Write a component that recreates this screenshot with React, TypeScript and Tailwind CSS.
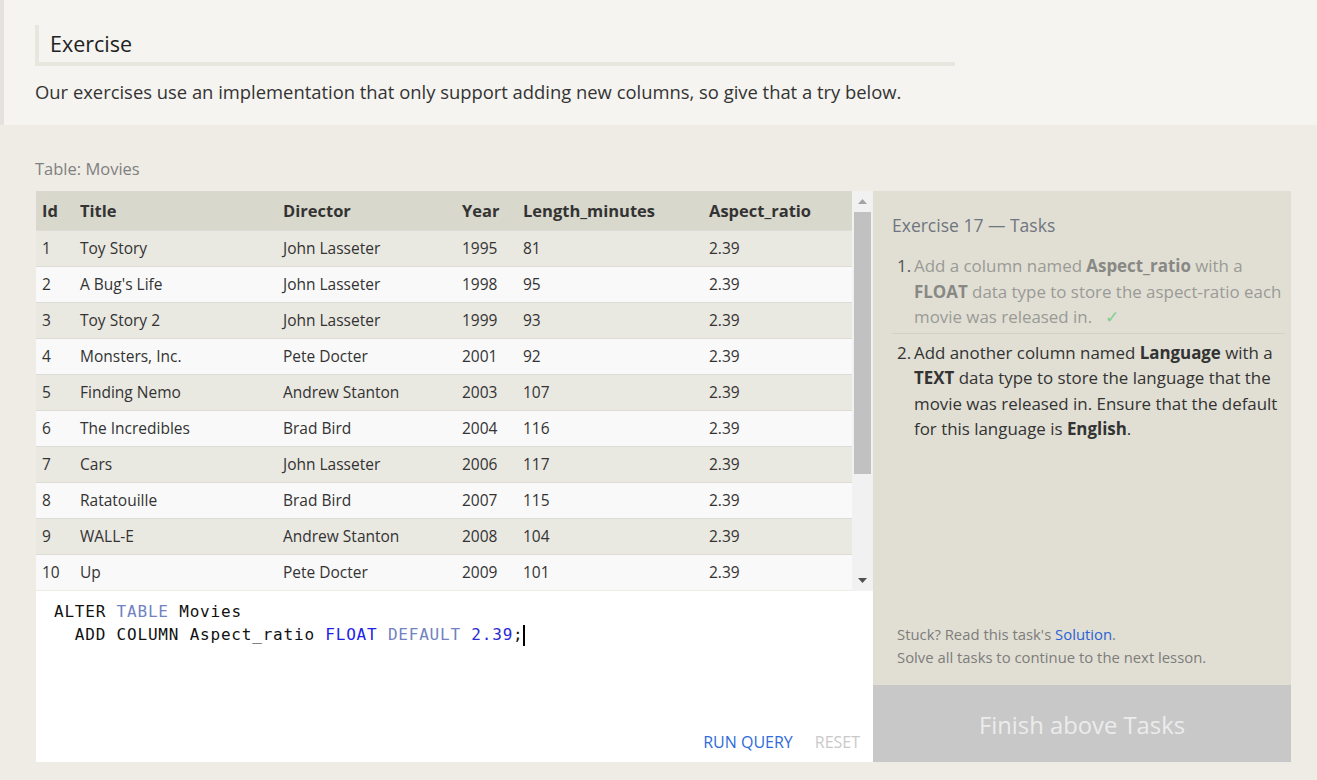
import React from "react";

const rows = [
  [1, "Toy Story", "John Lasseter", 1995, 81, "2.39"],
  [2, "A Bug's Life", "John Lasseter", 1998, 95, "2.39"],
  [3, "Toy Story 2", "John Lasseter", 1999, 93, "2.39"],
  [4, "Monsters, Inc.", "Pete Docter", 2001, 92, "2.39"],
  [5, "Finding Nemo", "Andrew Stanton", 2003, 107, "2.39"],
  [6, "The Incredibles", "Brad Bird", 2004, 116, "2.39"],
  [7, "Cars", "John Lasseter", 2006, 117, "2.39"],
  [8, "Ratatouille", "Brad Bird", 2007, 115, "2.39"],
  [9, "WALL-E", "Andrew Stanton", 2008, 104, "2.39"],
  [10, "Up", "Pete Docter", 2009, 101, "2.39"],
];

const cols = "grid grid-cols-[38px_203px_179px_61px_186px_149px]";

export default function App() {
  return (
    <div className="min-h-[780px] bg-[#efece5] font-['Open_Sans',sans-serif] text-[#333]">
      <div className="h-[125px] bg-[#f5f4f0] border-l-4 border-[#e4e1de] pl-[31px] pt-[25px]">
        <div className="w-[920px] h-[41px] border-l-4 border-b-4 border-[#e8e7de] pl-[11px] flex items-center text-[21.5px] text-[#222] leading-none">
          Exercise
        </div>
        <p className="mt-[14px] text-[18.4px] leading-[24px] text-[#333] whitespace-nowrap">
          Our exercises use an implementation that only support adding new columns, so give that a try below.
        </p>
      </div>

      <div className="pl-[36px] pt-[33px]">
        <div className="text-[16.5px] leading-[22px] text-[#808080] -ml-px">Table: Movies</div>
        <div className="mt-[11px] flex h-[571px]">
          <div className="w-[837px] flex flex-col">
            <div className="flex h-[400px]">
              <div className="w-[816px] flex flex-col text-[15.5px]">
                <div className={`${cols} h-[39px] pt-[2px] bg-[#d9d8cc] font-bold text-[16.5px] text-[#333] items-center`}>
                  <div className="pl-[6px]">Id</div>
                  <div className="pl-[6px]">Title</div>
                  <div className="pl-[6px]">Director</div>
                  <div className="pl-[6px]">Year</div>
                  <div className="pl-[6px]">Length_minutes</div>
                  <div className="pl-[6px]">Aspect_ratio</div>
                </div>
                {rows.map((r, i) => (
                  <div
                    key={i}
                    className={`${cols} h-[36px] items-center border-t border-[#dddcd6] ${
                      i % 2 === 0 ? "bg-[#e9e8e1]" : "bg-[#f9f9f9]"
                    }`}
                  >
                    {r.map((c, j) => (
                      <div key={j} className="pl-[6px] whitespace-nowrap">
                        {c}
                      </div>
                    ))}
                  </div>
                ))}
              </div>
              <div className="w-[21px] bg-[#f1f1f1] flex flex-col items-center">
                <div className="h-[21px] flex items-center justify-center">
                  <svg width="9" height="5" viewBox="0 0 9 5">
                    <path d="M0 5 L4.5 0 L9 5 Z" fill="#a3a3a3" />
                  </svg>
                </div>
                <div className="w-[17px] h-[262px] bg-[#c1c1c1]" />
                <div className="flex-1" />
                <div className="h-[21px] flex items-center justify-center">
                  <svg width="9" height="5" viewBox="0 0 9 5">
                    <path d="M0 0 L9 0 L4.5 5 Z" fill="#505050" />
                  </svg>
                </div>
              </div>
            </div>
            <div className="flex-1 bg-white flex flex-col">
              <div className="pl-[18px] pt-[9px] font-['DejaVu_Sans_Mono',monospace] text-[16px] tracking-[0.8px] leading-[23px] text-[#111] whitespace-pre">
                <div>
                  ALTER <span className="text-[#7182c0]">TABLE</span> Movies
                </div>
                <div>
                  {"  ADD COLUMN Aspect_ratio "}
                  <span className="text-[#2121e8]">FLOAT</span>{" "}
                  <span className="text-[#7182c0]">DEFAULT</span>{" "}
                  <span className="text-[#2b2bd4]">2.39</span>;
                  <span className="inline-block w-[2px] h-[21px] bg-black align-middle -ml-px" />
                </div>
              </div>
              <div className="flex-1" />
              <div className="flex justify-end items-center gap-[22px] pr-[13px] pb-[9px] text-[16px] leading-[22px]">
                <span className="text-[#2f6bd9]">RUN QUERY</span>
                <span className="text-[#c9c9c9]">RESET</span>
              </div>
            </div>
          </div>

          <div className="w-[418px] bg-[#e1dfd4] flex flex-col">
            <div className="pl-[19px] pr-[6px] pt-[22px]">
              <div className="text-[17.5px] leading-[24px] text-[#6f7580]">Exercise 17 — Tasks</div>
              <ol className="mt-[16px] text-[16.9px] leading-[25.5px]">
                <li className="flex text-[#9a9a96] pb-[3px] border-b border-[#d3d1c6]">
                  <span className="w-[21px] shrink-0 pl-[5px] text-[#555]">1.</span>
                  <span className="pl-[1px] w-[372px]">
                    Add a column named <b className="text-[#888884]">Aspect_ratio</b> with a{" "}
                    <b className="text-[#888884]">FLOAT</b> data type to store the aspect-ratio each movie was
                    released in. <span className="ml-[8px] text-[#7fcf8f]">✓</span>
                  </span>
                </li>
                <li className="flex text-[#333] pt-[6px]">
                  <span className="w-[21px] shrink-0 pl-[5px]">2.</span>
                  <span className="pl-[1px] w-[372px]">
                    Add another column named <b>Language</b> with a <b>TEXT</b> data type to store the
                    language that the movie was released in. Ensure that the default for this language is{" "}
                    <b>English</b>.
                  </span>
                </li>
              </ol>
            </div>
            <div className="flex-1" />
            <div className="pl-[24px] pb-[16px] text-[14.85px] leading-[23px] text-[#7d7d7a]">
              <div>
                Stuck? Read this task's <span className="text-[#2a62d4]">Solution</span>.
              </div>
              <div>Solve all tasks to continue to the next lesson.</div>
            </div>
            <div className="h-[77px] pt-[4px] bg-[#c8c8c8] flex items-center justify-center text-[23.8px] text-[#ececec]">
              Finish above Tasks
            </div>
          </div>
        </div>
      </div>
    </div>
  );
}
